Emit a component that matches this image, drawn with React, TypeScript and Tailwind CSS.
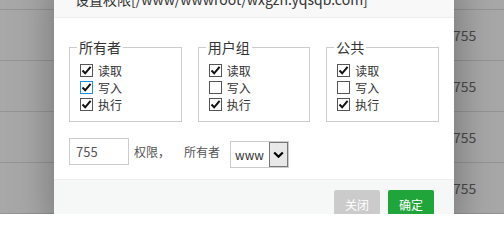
import type { ReactNode } from 'react';

const font = { fontFamily: '"Noto Sans CJK SC", "Liberation Sans", sans-serif' };

type Perm = { label: string; checked: boolean; focus?: boolean };

const groups: { title: string; items: Perm[] }[] = [
  {
    title: '所有者',
    items: [
      { label: '读取', checked: true },
      { label: '写入', checked: true, focus: true },
      { label: '执行', checked: true },
    ],
  },
  {
    title: '用户组',
    items: [
      { label: '读取', checked: true },
      { label: '写入', checked: false },
      { label: '执行', checked: true },
    ],
  },
  {
    title: '公共',
    items: [
      { label: '读取', checked: true },
      { label: '写入', checked: false },
      { label: '执行', checked: true },
    ],
  },
];

function Box({ checked, focus }: { checked: boolean; focus?: boolean }) {
  return (
    <span
      className={
        'flex h-[13px] w-[13px] shrink-0 items-center justify-center border bg-white ' +
        (focus ? 'border-[#1e8ee6]' : 'border-[#555555]')
      }
    >
      {checked && (
        <svg width="11" height="11" viewBox="0 0 11 11">
          <path d="M1.5 5.5 L4.2 8.3 L9.6 1.8" fill="none" stroke="#111" strokeWidth="2" />
        </svg>
      )}
    </span>
  );
}

function Group({ title, items }: { title: string; items: Perm[] }) {
  return (
    <fieldset className="w-[113px] border border-[#cccccc] pl-[10px] pt-[5px] pb-[8px]">
      <legend className="ml-[-3px] px-[2px] text-[14px] leading-[20px] text-[#333]">{title}</legend>
      {items.map((p) => (
        <div key={p.label} className="flex h-[17px] items-center gap-[5px] text-[12px] text-[#333]">
          <Box checked={p.checked} focus={p.focus} />
          <span>{p.label}</span>
        </div>
      ))}
    </fieldset>
  );
}

function Row({ children }: { children?: ReactNode }) {
  return (
    <div className="flex h-[51px] items-center border-b border-[#949494] pl-[453px] text-[14px] text-[#4a4a4a]">
      {children}
    </div>
  );
}

export default function App() {
  return (
    <div className="relative h-[214px] w-[504px] overflow-hidden bg-[#a8a8a8]" style={font}>
      <div className="mt-[-41px]">
        <Row />
        <Row>755</Row>
        <Row>755</Row>
        <Row>755</Row>
        <Row>755</Row>
      </div>

      <div className="absolute left-[54px] top-[-20px] w-[400px] bg-white shadow-[1px_1px_40px_rgba(0,0,0,0.35)]">
        <div className="h-[38px] border-b border-[#eeeeee] bg-[#f8f8f8] pl-[21px] text-[14px] leading-[38px] text-[#333]">
          设置权限[/www/wwwroot/wxgzh.yqsqb.com]
        </div>

        <div className="px-[15px] pt-[19px] pb-[11px]">
          <div className="flex gap-[16px]">
            {groups.map((g) => (
              <Group key={g.title} title={g.title} items={g.items} />
            ))}
          </div>

          <div className="mt-[16px] flex h-[30px] items-start text-[12px] text-[#555]">
            <div className="flex h-[27px] w-[60px] items-center border border-[#cccccc] pl-[6px] text-[13px]">
              755
            </div>
            <span className="ml-[5px] leading-[27px]">权限，</span>
            <span className="ml-[14px] leading-[27px]">所有者</span>
            <div className="ml-[10px] mt-[3px] flex h-[27px] w-[59px] border border-[#cccccc]">
              <span className="flex-1 pl-[4px] text-[12px] leading-[25px] text-[#333]">www</span>
              <span className="flex w-[19px] items-center justify-center border border-[#777] bg-[#e8e8e8]">
                <svg width="11" height="8" viewBox="0 0 11 8">
                  <path d="M1.2 1.5 L5.5 5.8 L9.8 1.5" fill="none" stroke="#000" strokeWidth="2.2" />
                </svg>
              </span>
            </div>
          </div>
        </div>

        <div className="flex justify-end gap-[8px] border-t border-[#eeeeee] bg-[#f6f7f7] px-[20px] pt-[10px] pb-[12px]">
          <button className="h-[30px] w-[46px] rounded-[2px] bg-[#cbcbcb] text-[12px] text-white">关闭</button>
          <button className="h-[30px] w-[46px] rounded-[2px] bg-[#20a53a] text-[12px] text-white">确定</button>
        </div>
      </div>
    </div>
  );
}
